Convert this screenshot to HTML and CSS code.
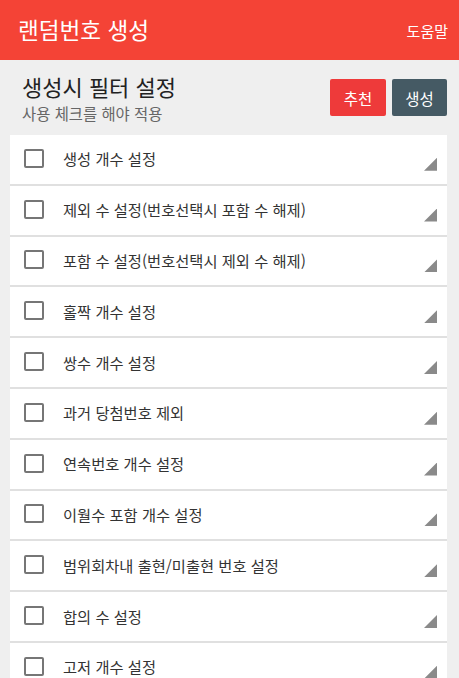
FILE: index.html
```html
<!DOCTYPE html>
<html lang="ko">
<head>
<meta charset="utf-8">
<title>랜덤번호 생성</title>
<link rel="stylesheet" href="styles.css">
</head>
<body>
<header class="appbar">
  <h1 class="appbar-title">랜덤번호 생성</h1>
  <span class="appbar-action">도움말</span>
</header>
<section class="filter-head">
  <div class="filter-text">
    <div class="filter-title">생성시 필터 설정</div>
    <div class="filter-sub">사용 체크를 해야 적용</div>
  </div>
  <div class="filter-buttons">
    <button class="btn btn-red">추천</button>
    <button class="btn btn-dark">생성</button>
  </div>
</section>
<ul class="list">
  <li class="row"><span class="check"></span><span class="label">생성 개수 설정</span><span class="corner"></span></li>
  <li class="row"><span class="check"></span><span class="label">제외 수 설정(번호선택시 포함 수 해제)</span><span class="corner"></span></li>
  <li class="row"><span class="check"></span><span class="label">포함 수 설정(번호선택시 제외 수 해제)</span><span class="corner"></span></li>
  <li class="row"><span class="check"></span><span class="label">홀짝 개수 설정</span><span class="corner"></span></li>
  <li class="row"><span class="check"></span><span class="label">쌍수 개수 설정</span><span class="corner"></span></li>
  <li class="row"><span class="check"></span><span class="label">과거 당첨번호 제외</span><span class="corner"></span></li>
  <li class="row"><span class="check"></span><span class="label">연속번호 개수 설정</span><span class="corner"></span></li>
  <li class="row"><span class="check"></span><span class="label">이월수 포함 개수 설정</span><span class="corner"></span></li>
  <li class="row"><span class="check"></span><span class="label">범위회차내 출현/미출현 번호 설정</span><span class="corner"></span></li>
  <li class="row"><span class="check"></span><span class="label">합의 수 설정</span><span class="corner"></span></li>
  <li class="row"><span class="check"></span><span class="label">고저 개수 설정</span><span class="corner"></span></li>
</ul>
</body>
</html>
```
FILE: styles.css
```css
* { box-sizing: border-box; }
html, body {
  margin: 0;
  padding: 0;
  background: #efefef;
  font-family: "Noto Sans CJK KR", "Noto Sans", Roboto, sans-serif;
  overflow: hidden;
}
.appbar {
  height: 60px;
  background: #f44336;
  display: flex;
  align-items: center;
  justify-content: space-between;
  padding: 0 11px 0 18px;
  color: #fff;
}
.appbar-title {
  margin: 0;
  font-size: 22.6px;
  font-weight: 400;
  line-height: 1;
}
.appbar-action {
  font-size: 15px;
  line-height: 1;
}
.filter-head {
  display: flex;
  justify-content: space-between;
  align-items: flex-start;
  padding: 11px 12px 0 22px;
  height: 75px;
}
.filter-title {
  font-size: 22px;
  line-height: 30px;
  color: #222;
}
.filter-sub {
  font-size: 15.4px;
  line-height: 20px;
  color: #666;
  margin-top: 2px;
}
.filter-buttons {
  display: flex;
  gap: 6px;
  margin-top: 8px;
}
.btn {
  border: none;
  border-radius: 2px;
  height: 37px;
  width: 56px;
  color: #fff;
  font-family: inherit;
  font-size: 15.5px;
  padding: 0;
}
.btn-red { background: #ee3a3a; }
.btn-dark { background: #455a64; width: 55px; }
.list {
  list-style: none;
  margin: 0 12px 0 10px;
  padding: 0;
}
.row {
  position: relative;
  height: 50.8px;
  background: #fff;
  border-bottom: 2px solid #e0e0e0;
  display: flex;
  align-items: center;
  padding: 0 0 2px 14px;
}
.check {
  width: 20px;
  height: 19px;
  border: 2px solid #767676;
  border-radius: 2px;
  flex: none;
}
.label {
  margin-left: 19px;
  font-size: 15.3px;
  color: #333;
}
.corner {
  position: absolute;
  right: 10px;
  bottom: 13px;
  width: 13px;
  height: 13px;
  background: #8a8a8a;
  clip-path: polygon(100% 0, 100% 100%, 0 100%);
}
```
